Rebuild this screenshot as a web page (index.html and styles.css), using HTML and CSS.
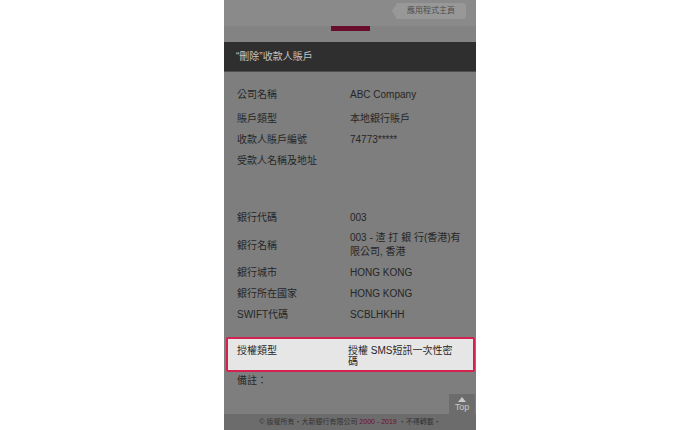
FILE: index.html
```html
<!DOCTYPE html>
<html lang="zh-Hant">
<head>
<meta charset="utf-8">
<title>刪除收款人賬戶</title>
<link rel="stylesheet" href="styles.css">
</head>
<body>
<div class="phone">
  <div class="topbar">
    <a class="home-btn"><span class="home-arrow"></span><span class="home-label">應用程式主頁</span></a>
  </div>
  <div class="tabband"><span class="tab-indicator"></span></div>
  <div class="titlebar">“刪除”收款人賬戶</div>
  <div class="content">
    <div class="row first"><div class="label">公司名稱</div><div class="value">ABC Company</div></div>
    <div class="row"><div class="label">賬戶類型</div><div class="value">本地銀行賬戶</div></div>
    <div class="row"><div class="label">收款人賬戶編號</div><div class="value">74773*****</div></div>
    <div class="row address"><div class="label">受款人名稱及地址</div><div class="value"></div></div>
    <div class="row"><div class="label">銀行代碼</div><div class="value">003</div></div>
    <div class="row center"><div class="label">銀行名稱</div><div class="value multi">003 - 渣 打 銀 行(香港)有限公司, 香港</div></div>
    <div class="row"><div class="label">銀行城市</div><div class="value">HONG KONG</div></div>
    <div class="row"><div class="label">銀行所在國家</div><div class="value">HONG KONG</div></div>
    <div class="row"><div class="label">SWIFT代碼</div><div class="value">SCBLHKHH</div></div>
    <div class="highlight"><div class="label">授權類型</div><div class="value">授權 SMS短訊一次性密碼</div></div>
    <div class="remark">備註：</div>
  </div>
  <div class="footer">© 版權所有・大新銀行有限公司 <span class="years">2000 - 2019</span> ・不得轉載・</div>
  <a class="top-btn"><span class="top-arrow"></span><span class="top-text">Top</span></a>
</div>
</body>
</html>
```

FILE: styles.css
```css
html, body {
  margin: 0;
  padding: 0;
  background: #ffffff;
  overflow: hidden;
}
body {
  font-family: "Liberation Sans", "Noto Sans CJK TC", sans-serif;
}
.phone {
  position: relative;
  width: 252px;
  height: 430px;
  margin-left: 224px;
  display: flex;
  flex-direction: column;
  background: #7e7e7e;
}
.topbar {
  height: 26px;
  background: #8a8a8a;
  display: flex;
  justify-content: flex-end;
  align-items: flex-start;
  padding-right: 10px;
}
.home-btn {
  margin-top: 3px;
  height: 16px;
  display: flex;
  align-items: center;
}
.home-arrow {
  width: 0;
  height: 0;
  border-top: 8px solid transparent;
  border-bottom: 8px solid transparent;
  border-right: 5px solid #989898;
}
.home-label {
  height: 16px;
  line-height: 16px;
  padding: 0 11px 0 10px;
  background: #989898;
  border-radius: 0 3px 3px 0;
  font-size: 8px;
  color: #4e4e4e;
}
.tabband {
  height: 16px;
  background: #838383;
  padding-left: 107px;
}
.tab-indicator {
  display: block;
  width: 39px;
  height: 5px;
  background: #6a0d2c;
}
.titlebar {
  height: 29px;
  line-height: 29px;
  background: #2f2f2f;
  border-bottom: 1px solid #4f4f4f;
  color: #c4c4c4;
  font-size: 10px;
  padding-left: 12px;
}
.content {
  flex: 1;
  padding-top: 12px;
  color: #262626;
  font-size: 10px;
}
.row {
  display: grid;
  grid-template-columns: 113px 112px;
  padding: 3px 0 3px 13px;
  line-height: 15px;
  align-items: start;
}
.row.first {
  margin-bottom: 3px;
}
.row.address {
  min-height: 51px;
}
.row.center {
  align-items: center;
}
.value.multi {
  line-height: 14px;
}
.highlight {
  margin: 12px 1px 0 2px;
  display: grid;
  grid-template-columns: 111px 107px;
  padding: 6px 0 3px 9px;
  background: #e6e6e6;
  border: 2px solid #d42250;
  border-radius: 2px;
  line-height: 11px;
  color: #262626;
}
.highlight .label {
  line-height: 11px;
}
.remark {
  padding: 2px 0 0 13px;
  line-height: 14px;
}
.footer {
  height: 16px;
  line-height: 16px;
  background: #6c6c6c;
  color: #333333;
  font-size: 7px;
  text-align: center;
  white-space: nowrap;
}
.years {
  color: #6e0f2f;
}
.top-btn {
  position: absolute;
  right: 1px;
  bottom: 16px;
  width: 26px;
  height: 20px;
  background: #6c6c6c;
  display: flex;
  flex-direction: column;
  align-items: center;
}
.top-arrow {
  margin-top: 3px;
  width: 0;
  height: 0;
  border-left: 4px solid transparent;
  border-right: 4px solid transparent;
  border-bottom: 5px solid #c9c9c9;
}
.top-text {
  font-size: 9px;
  line-height: 11px;
  color: #c9c9c9;
}
```
